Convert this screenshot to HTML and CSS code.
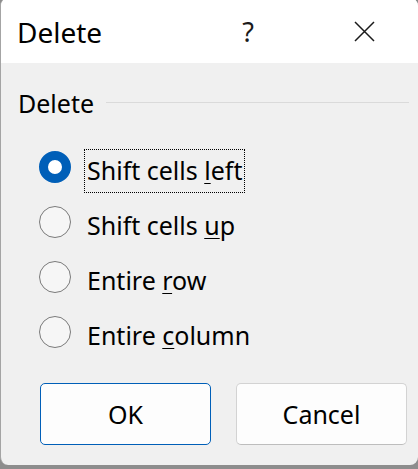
FILE: index.html
```html
<!DOCTYPE html>
<html lang="en">
<head>
    <meta charset="UTF-8">
    <meta name="viewport" content="width=device-width, initial-scale=1.0">
    <title>Delete</title>
    <link rel="stylesheet" href="styles.css">
</head>
<body>

<div class="dialog">
    <!-- Caption bar -->
    <div class="titlebar">
        <span class="title">Delete</span>
        <span class="help">?</span>
        <span class="close">
            <svg width="21" height="21" viewBox="0 0 21 21">
                <path d="M1 1 L20 20 M20 1 L1 20" stroke="#1a1a1a" stroke-width="1.5" fill="none"/>
            </svg>
        </span>
    </div>

    <div class="content">
        <!-- Group box header -->
        <div class="group-header">
            <span class="group-label">Delete</span>
            <span class="group-line"></span>
        </div>

        <div class="options">
            <div class="option">
                <span class="radio checked"></span>
                <span class="option-label focused">Shift cells <u>l</u>eft</span>
            </div>
            <div class="option">
                <span class="radio"></span>
                <span class="option-label">Shift cells <u>u</u>p</span>
            </div>
            <div class="option">
                <span class="radio"></span>
                <span class="option-label">Entire <u>r</u>ow</span>
            </div>
            <div class="option">
                <span class="radio"></span>
                <span class="option-label">Entire <u>c</u>olumn</span>
            </div>
        </div>

        <div class="buttons">
            <button class="btn btn-default">OK</button>
            <button class="btn">Cancel</button>
        </div>
    </div>
</div>

</body>
</html>
```

FILE: styles.css
```css
html {
    background-color: #8d8d8d;
}

body {
    margin: 0;
    font-family: "Noto Sans", "Open Sans", sans-serif;
    color: #000000;
    overflow: hidden;
}

.dialog {
    width: 418px;
    height: 467px;
    margin-top: -2px;
    box-sizing: border-box;
    border-left: 1px solid #a4a4a4;
    border-radius: 8px;
    background-color: #f0f0f0;
    display: flex;
    flex-direction: column;
    overflow: hidden;
}

/* Caption bar */
.titlebar {
    height: 65px;
    padding-top: 2px;
    box-sizing: border-box;
    background-color: #ffffff;
    display: flex;
    align-items: center;
    padding-left: 16px;
}

.title {
    flex: 1;
    font-size: 28px;
}

.help {
    width: 56px;
    text-align: center;
    font-size: 27px;
    color: #1a1a1a;
}

.close {
    width: 80px;
    margin-left: 48px;
    margin-right: 14px;
    display: flex;
    justify-content: center;
}

.content {
    flex: 1;
    padding: 20px 0 0 17px;
    display: flex;
    flex-direction: column;
}

/* Group box header */
.group-header {
    height: 40px;
    display: flex;
    align-items: center;
    gap: 12px;
}

.group-label {
    font-size: 25px;
}

.group-line {
    width: 303px;
    height: 1px;
    background-color: #dadada;
    margin-top: -2px;
}

.options {
    margin-top: 22px;
    display: flex;
    flex-direction: column;
    gap: 7px;
    padding-left: 21px;
}

.option {
    height: 48px;
    display: flex;
    align-items: flex-start;
}

.radio {
    width: 32px;
    height: 32px;
    margin-top: 6px;
    box-sizing: border-box;
    border-radius: 50%;
    border: 1.5px solid #7a7a7a;
    background-color: #f6f6f6;
    flex-shrink: 0;
}

.radio.checked {
    border: 9.5px solid #005fb8;
    background-color: #ffffff;
}

.option-label {
    margin-top: 4px;
    margin-left: 13px;
    height: 44px;
    box-sizing: border-box;
    padding: 0 2px;
    border: 1px solid transparent;
    font-size: 25px;
    line-height: 40px;
}

.option-label u {
    text-underline-offset: 3px;
    text-decoration-thickness: 1px;
}

.option-label.focused {
    border: 1px dotted #000000;
}

.buttons {
    margin-top: 25px;
    padding-left: 22px;
    display: flex;
    gap: 25px;
}

.btn {
    width: 171px;
    height: 62px;
    font-family: inherit;
    font-size: 25px;
    color: #000000;
    background-color: #fdfdfd;
    border: 1px solid #d3d3d3;
    border-bottom-color: #bdbdbd;
    border-radius: 5px;
}

.btn-default {
    border: 1px solid #005fb8;
}
```
